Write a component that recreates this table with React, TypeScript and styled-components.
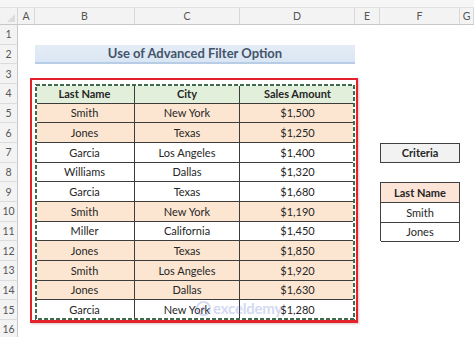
import React from 'react'
import styled, { createGlobalStyle } from 'styled-components'

const GlobalStyle = createGlobalStyle`
  html, body {
    margin: 0;
    padding: 0;
    background: #ffffff;
  }
  body {
    font-family: 'Lato', 'Noto Sans', sans-serif;
    color: #262626;
  }
`;

const ROW_H = 19.67;
const COLS = [18, 17, 100, 105, 115, 25, 80];
const LETTERS = ['A', 'B', 'C', 'D', 'E', 'F', 'G'];

const Page = styled.div`
  width: 474px;
  height: 337px;
  overflow: hidden;
  position: relative;
  background: #ffffff;
`;

const TopStrip = styled.div`
  height: 8px;
  background: #f6f6f6;
  border-bottom: 1px solid #e2e2e2;
  box-sizing: border-box;
`;

const Sheet = styled.div`
  display: grid;
  grid-template-columns: ${COLS.map(c => `${c}px`).join(' ')} 1fr;
  grid-template-rows: 17px repeat(16, ${ROW_H}px);
`;

const Corner = styled.div`
  background: #f3f3f3;
  border-right: 1px solid #d4d4d4;
  border-bottom: 1px solid #c8c8c8;
  box-sizing: border-box;
  position: relative;

  &::after {
    content: '';
    position: absolute;
    right: 2px;
    bottom: 2px;
    width: 0;
    height: 0;
    border-left: 8px solid transparent;
    border-bottom: 8px solid #dcdcdc;
  }
`;

const ColHead = styled.div`
  background: #f3f3f3;
  border-right: 1px solid #d8d8d8;
  border-bottom: 1px solid #c8c8c8;
  box-sizing: border-box;
  display: flex;
  align-items: center;
  justify-content: center;
  font-size: 10.5px;
  color: #555555;
`;

const RowHead = styled.div`
  grid-column: 1;
  background: #f3f3f3;
  border-right: 1px solid #c8c8c8;
  border-bottom: 1px solid #dcdcdc;
  box-sizing: border-box;
  display: flex;
  align-items: center;
  justify-content: center;
  font-size: 10.5px;
  color: #555555;
`;

const Title = styled.div`
  grid-column: 3 / 6;
  grid-row: 3;
  background: linear-gradient(180deg, #e4edf7 0%, #dae6f3 100%);
  border-bottom: 2px solid #b7cde6;
  box-sizing: border-box;
  display: flex;
  align-items: center;
  justify-content: center;
  font-size: 13px;
  font-weight: 700;
  color: #44546a;
`;

const TableWrap = styled.div`
  grid-column: 3 / 6;
  grid-row: 5 / 17;
  position: relative;
  display: grid;
  grid-template-columns: 100px 105px 115px;
  grid-auto-rows: ${ROW_H}px;
`;

const Cell = styled.div<{ $bg: string; $bold?: boolean; $last?: boolean }>`
  background: ${p => p.$bg};
  border-bottom: 1px solid #3c3c3c;
  border-right: ${p => (p.$last ? 'none' : '1px solid #3c3c3c')};
  box-sizing: border-box;
  display: flex;
  align-items: center;
  justify-content: center;
  font-size: 11px;
  font-weight: ${p => (p.$bold ? 700 : 400)};
  color: #262626;
`;

const RedFrame = styled.div`
  position: absolute;
  left: -5px;
  top: -6px;
  right: -3px;
  bottom: -3px;
  border: 2px solid #e3232b;
  border-bottom-width: 3px;
  box-shadow: 1px 1px 2px rgba(120, 0, 0, 0.25);
  pointer-events: none;
`;

const Ants = styled.svg`
  position: absolute;
  left: 0;
  top: 0;
  pointer-events: none;
`;

const CriteriaLabel = styled.div`
  grid-column: 7;
  grid-row: 8;
  background: #f2f2f2;
  border: 1px solid #404040;
  box-sizing: border-box;
  display: flex;
  align-items: center;
  justify-content: center;
  font-size: 11px;
  font-weight: 700;
`;

const CriteriaTable = styled.div`
  grid-column: 7;
  grid-row: 10 / 13;
  display: grid;
  grid-auto-rows: ${ROW_H}px;
  border: 1px solid #404040;
  border-bottom: none;
`;

const CritCell = styled.div<{ $head?: boolean }>`
  background: ${p => (p.$head ? '#fce4d6' : '#ffffff')};
  border-bottom: 1px solid #404040;
  box-sizing: border-box;
  display: flex;
  align-items: center;
  justify-content: center;
  font-size: 11px;
  font-weight: ${p => (p.$head ? 700 : 400)};
`;

const Watermark = styled.div`
  position: absolute;
  left: 196px;
  top: 299px;
  display: flex;
  align-items: center;
  gap: 2px;
  opacity: 0.3;
  pointer-events: none;
  font-size: 15px;
  font-weight: 700;
  letter-spacing: -0.2px;
  color: #6f82d8;
`;

const rows: [string, string, string, boolean][] = [
  ['Smith', 'New York', '$1,500', true],
  ['Jones', 'Texas', '$1,250', true],
  ['Garcia', 'Los Angeles', '$1,400', false],
  ['Williams', 'Dallas', '$1,320', false],
  ['Garcia', 'Texas', '$1,680', false],
  ['Smith', 'New York', '$1,190', true],
  ['Miller', 'California', '$1,450', false],
  ['Jones', 'Texas', '$1,850', true],
  ['Smith', 'Los Angeles', '$1,920', true],
  ['Jones', 'Dallas', '$1,630', true],
  ['Garcia', 'New York', '$1,280', false],
];

const PEACH = '#fce6d2';
const GREEN = '#e2efda';

export default function App() {
  const tw = 320;
  const th = ROW_H * 12;
  return (
    <Page>
      <GlobalStyle />
      <TopStrip />
      <Sheet>
        <Corner />
        {LETTERS.map(l => (
          <ColHead key={l}>{l}</ColHead>
        ))}
        {Array.from({ length: 16 }, (_, i) => (
          <RowHead key={i} style={{ gridRow: i + 2 }}>
            {i + 1}
          </RowHead>
        ))}

        <Title>Use of Advanced Filter Option</Title>

        <TableWrap>
          {['Last Name', 'City', 'Sales Amount'].map((h, i) => (
            <Cell key={h} $bg={GREEN} $bold $last={i === 2}>
              {h}
            </Cell>
          ))}
          {rows.map((r, ri) =>
            r.slice(0, 3).map((v, ci) => (
              <Cell key={`${ri}-${ci}`} $bg={r[3] ? PEACH : '#ffffff'} $last={ci === 2}>
                {v as string}
              </Cell>
            ))
          )}
          <RedFrame />
          <Ants width={tw} height={th} viewBox={`0 0 ${tw} ${th}`}>
            <rect x="1" y="1" width={tw - 2} height={th - 2} fill="none" stroke="#ffffff" strokeWidth="2" />
            <rect
              x="1"
              y="1"
              width={tw - 2}
              height={th - 2}
              fill="none"
              stroke="#3d6b4c"
              strokeWidth="2"
              strokeDasharray="4 2"
            />
          </Ants>
        </TableWrap>

        <CriteriaLabel>Criteria</CriteriaLabel>
        <CriteriaTable>
          <CritCell $head>Last Name</CritCell>
          <CritCell>Smith</CritCell>
          <CritCell>Jones</CritCell>
        </CriteriaTable>
      </Sheet>
      <Watermark>
        <svg width="15" height="15" viewBox="0 0 16 16">
          <circle cx="8" cy="8" r="7" fill="none" stroke="#6f82d8" strokeWidth="2" />
          <path d="M5 8 L8 5 L11 8 L8 11 Z" fill="#6f82d8" />
        </svg>
        exceldemy
      </Watermark>
    </Page>
  )
}
